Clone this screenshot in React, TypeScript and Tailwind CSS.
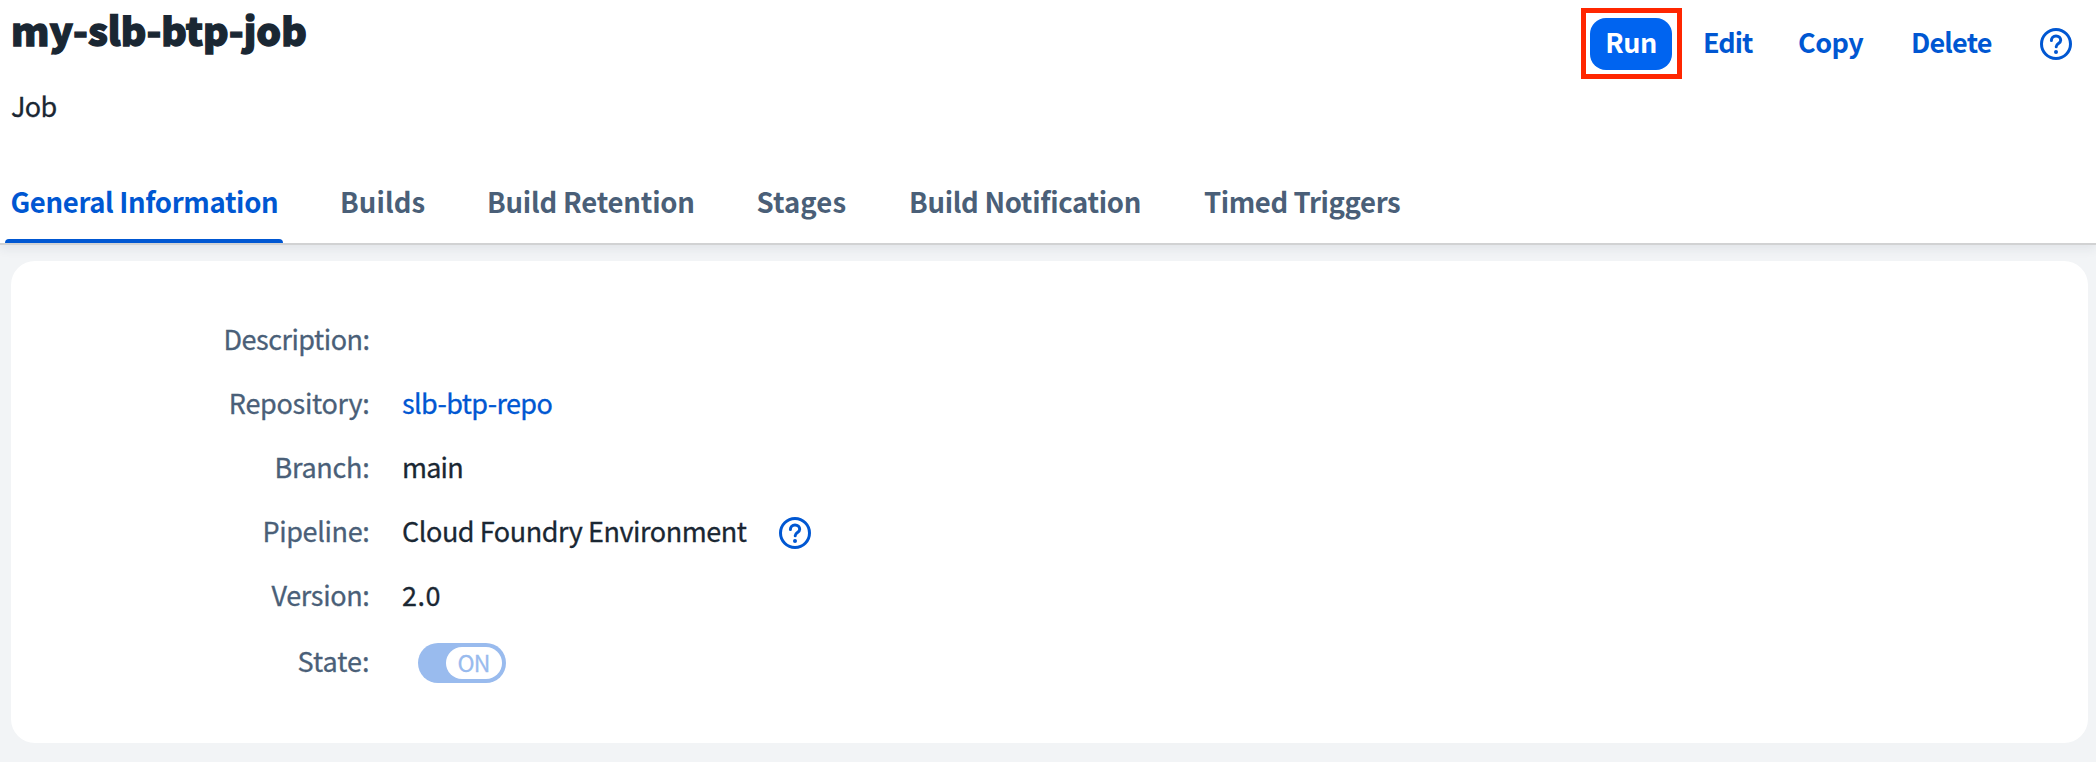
import type { ReactNode } from "react";

function HelpIcon() {
  return (
    <svg width="32" height="32" viewBox="0 0 32 32" fill="none" stroke="#0057d2" className="block shrink-0">
      <circle cx="16" cy="16" r="14.5" strokeWidth="3" />
      <path d="M11.4 12.6C11.4 9.9 13.3 8 16 8s4.7 1.8 4.7 4.3c0 3.2-4.5 3.2-4.5 6.4" strokeWidth="3" strokeLinecap="round" />
      <circle cx="16" cy="23.9" r="2" fill="#0057d2" stroke="none" />
    </svg>
  );
}

function Row({ label, spacing, children }: { label: string; spacing: string; children?: ReactNode }) {
  return (
    <div className="flex h-16 items-center">
      <dt className={`w-[358.5px] text-right text-[#4a5f78] [-webkit-text-stroke:0.3px] ${spacing}`}>{label}</dt>
      <dd className="flex items-center pl-[32.5px] text-[#1a2733] [-webkit-text-stroke:0.3px]">{children}</dd>
    </div>
  );
}

const tabs = [
  { label: "Builds", className: "w-[147px] tracking-[0.1px]" },
  { label: "Build Retention", className: "w-[269.5px] tracking-[-0.2px]" },
  { label: "Stages", className: "w-[152.5px] tracking-[0.1px]" },
  { label: "Build Notification", className: "w-[295px] tracking-[-0.3px]" },
  { label: "Timed Triggers", className: "tracking-[-0.4px]" },
];

export default function App() {
  return (
    <div className="flex h-[762px] w-[2096px] flex-col overflow-hidden bg-[#f2f4f6] font-['Noto_Sans_CJK_SC',sans-serif] text-[27px] leading-10">
      <header className="flex h-[245px] shrink-0 flex-col border-b-2 border-[#d1d2d3] bg-white shadow-[0_4px_10px_rgba(34,53,72,0.08)]">
        <div className="flex h-[156px] justify-between">
          <div className="pt-px pl-[11px] text-[#1a2733]">
            <h1 className="text-[39px] leading-[57px] font-black [-webkit-text-stroke:1.3px]">my-slb-btp-job</h1>
            <p className="mt-7 tracking-[-0.7px] [-webkit-text-stroke:0.3px]">Job</p>
          </div>
          <div className="mt-2 flex h-[71px] w-[515px] items-center text-[27px] font-bold text-[#0057d2]">
            <div className="h-[71px] w-[101px] shrink-0 border-[5px] border-[#ff2600] p-1">
              <button className="mt-[1px] block h-[52px] w-[82px] rounded-2xl bg-[#0064f0] pb-[4px] text-center leading-[48px] tracking-[-0.5px] text-white">Run</button>
            </div>
            <button className="ml-[21px] w-[95px] pb-1 text-left tracking-[-1px]">Edit</button>
            <button className="w-[113px] pb-1 text-left tracking-[-0.5px]">Copy</button>
            <button className="w-[128.5px] pb-1 text-left tracking-[-0.8px]">Delete</button>
            <HelpIcon />
          </div>
        </div>
        <nav className="flex h-[87px] items-stretch pl-[5px] text-[27.5px] font-bold text-[#4a5f78]">
          <div className="mr-[57px] flex w-[278px] flex-col justify-between pl-[5.5px] text-[#0057d2]">
            <a className="mt-[25px] tracking-[-0.35px] whitespace-nowrap">General Information</a>
            <span className="-ml-[5.5px] h-1 rounded-t-[4px] bg-[#0057d2]" />
          </div>
          {tabs.map((tab) => (
            <a key={tab.label} className={`mt-[25px] whitespace-nowrap ${tab.className}`}>{tab.label}</a>
          ))}
        </nav>
      </header>
      <main className="pt-4 pr-2 pl-[11px]">
        <dl className="h-[482px] rounded-[24px] bg-white pt-[46px]">
          <Row label="Description:" spacing="tracking-[-0.5px]" />
          <Row label="Repository:" spacing="tracking-[-0.3px]">
            <a className="tracking-[-0.6px] text-[#0057d2]">slb-btp-repo</a>
          </Row>
          <Row label="Branch:" spacing="tracking-[-0.25px]">
            <span className="tracking-[-0.8px]">main</span>
          </Row>
          <Row label="Pipeline:" spacing="tracking-[-0.35px]">
            <span className="mr-[31px] w-[346px] tracking-[-0.45px] whitespace-nowrap">Cloud Foundry Environment</span>
            <div className="mt-[3px]">
              <HelpIcon />
            </div>
          </Row>
          <Row label="Version:" spacing="tracking-[-0.35px]">
            <span className="tracking-[0.5px]">2.0</span>
          </Row>
          <div className="pt-[2px]">
            <Row label="State:" spacing="">
              <div className="mt-[4px] ml-[16px] flex h-10 w-[88px] items-center justify-end rounded-full bg-[#99bbee] pr-1">
                <div className="flex h-8 w-14 items-center justify-center rounded-full bg-white pr-[1px] pb-[3px] text-[23px] leading-7 tracking-[-0.8px] text-[#99bbee]">ON</div>
              </div>
            </Row>
          </div>
        </dl>
      </main>
    </div>
  );
}
